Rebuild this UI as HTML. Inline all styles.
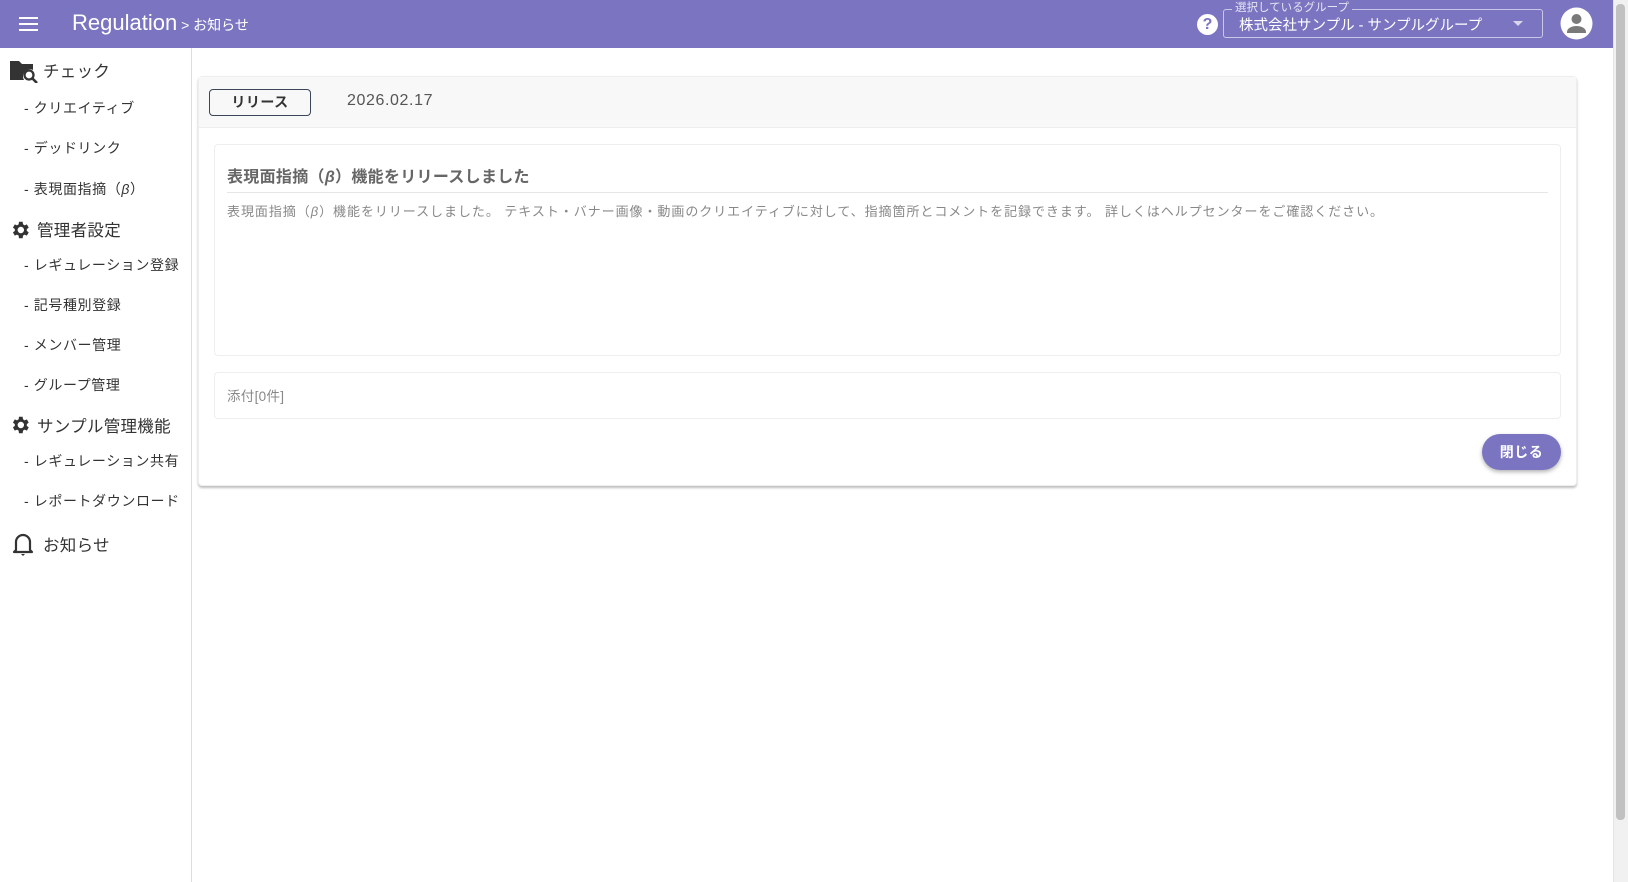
<!DOCTYPE html>
<html><head><meta charset="utf-8"><style>
*{box-sizing:border-box;margin:0;padding:0}
body{width:1628px;height:882px;overflow:hidden;background:#fff;font-family:"Liberation Sans","Noto Sans CJK JP",sans-serif;position:relative;color:#333}
.hdr{position:absolute;left:0;top:0;width:1613px;height:48px;background:#7b75c1;color:#fff}
.abs{position:absolute}
.side{position:absolute;left:0;top:48px;width:192px;height:834px;border-right:1px solid #ddd}
.it{position:absolute;left:24px;font-size:14px;color:#333;transform:translateY(-50%);white-space:nowrap;letter-spacing:0.6px}
.hd{position:absolute;left:37px;font-size:16.5px;color:#333;transform:translateY(-50%);white-space:nowrap;letter-spacing:0.3px}
.sb{position:absolute;left:1613px;top:0;width:15px;height:882px;background:#f1f1f1;border-left:1px solid #e4e4e4}
.th{position:absolute;left:1616px;top:4px;width:9px;height:816px;background:#c1c1c1;border-radius:4px}
</style></head><body>
<div class="hdr">
 <div class="abs" style="left:19px;top:17px;width:19px;height:2px;background:#fff"></div>
 <div class="abs" style="left:19px;top:23px;width:19px;height:2px;background:#fff"></div>
 <div class="abs" style="left:19px;top:29px;width:19px;height:2px;background:#fff"></div>
 <div class="abs" style="left:72px;top:10px;font-size:22px;white-space:nowrap">Regulation<span style="font-size:14px"> &gt; お知らせ</span></div>
 <div class="abs" style="left:1197px;top:14px;width:21px;height:21px;border-radius:50%;background:#fff;color:#7b75c1;font-weight:bold;font-size:16px;text-align:center;line-height:21px">?</div>
 <div class="abs" style="left:1223px;top:9px;width:320px;height:29px;border:1px solid rgba(255,255,255,.6);border-radius:3px"></div>
 <div class="abs" style="left:1232px;top:1px;padding:0 3px;background:#7b75c1;font-size:11.5px;color:rgba(255,255,255,.8);line-height:14px">選択しているグループ</div>
 <div class="abs" style="left:1239px;top:14px;font-size:14.5px;white-space:nowrap">株式会社サンプル - サンプルグループ</div>
 <div class="abs" style="left:1513px;top:21px;width:0;height:0;border-left:5px solid transparent;border-right:5px solid transparent;border-top:5px solid rgba(255,255,255,.7)"></div>
 <svg class="abs" style="left:1560px;top:7px" width="33" height="33" viewBox="0 0 33 33"><circle cx="16.5" cy="16.5" r="16" fill="#fff"/><circle cx="16.5" cy="12" r="5" fill="#7a7a7a"/><path d="M7 25c0-4 5-6 9.5-6s9.5 2 9.5 6v1H7z" fill="#7a7a7a"/></svg>
</div>
<div class="side">
 <svg class="abs" style="left:9px;top:11px" width="30" height="24" viewBox="0 0 30 24"><path d="M1 2h9l3 3h11v6a7 7 0 0 0-9 10H1z" fill="#333"/><circle cx="20" cy="16" r="4.5" fill="none" stroke="#333" stroke-width="2.3"/><path d="M23 19l5 5" stroke="#333" stroke-width="2.6"/></svg>
 <div class="hd" style="left:43px;top:22px">チェック</div>
 <div class="it" style="top:60px">- クリエイティブ</div>
 <div class="it" style="top:100px">- デッドリンク</div>
 <div class="it" style="top:141px">- 表現面指摘（<i>β</i>）</div>
 <svg class="abs" style="left:9px;top:171px" width="22" height="22" viewBox="0 0 24 24"><path fill="#333" d="M19.4 13a7.5 7.5 0 0 0 0-2l2.1-1.6-2-3.5-2.5 1a7 7 0 0 0-1.7-1L14.9 3h-4l-.4 2.9a7 7 0 0 0-1.7 1l-2.5-1-2 3.5L6.4 11a7.5 7.5 0 0 0 0 2l-2.1 1.6 2 3.5 2.5-1a7 7 0 0 0 1.7 1l.4 2.9h4l.4-2.9a7 7 0 0 0 1.7-1l2.5 1 2-3.5zM12.9 15.5a3.5 3.5 0 1 1 0-7 3.5 3.5 0 0 1 0 7z"/></svg>
 <div class="hd" style="top:181px">管理者設定</div>
 <div class="it" style="top:217px">- レギュレーション登録</div>
 <div class="it" style="top:257px">- 記号種別登録</div>
 <div class="it" style="top:297px">- メンバー管理</div>
 <div class="it" style="top:337px">- グループ管理</div>
 <svg class="abs" style="left:9px;top:366px" width="22" height="22" viewBox="0 0 24 24"><path fill="#333" d="M19.4 13a7.5 7.5 0 0 0 0-2l2.1-1.6-2-3.5-2.5 1a7 7 0 0 0-1.7-1L14.9 3h-4l-.4 2.9a7 7 0 0 0-1.7 1l-2.5-1-2 3.5L6.4 11a7.5 7.5 0 0 0 0 2l-2.1 1.6 2 3.5 2.5-1a7 7 0 0 0 1.7 1l.4 2.9h4l.4-2.9a7 7 0 0 0 1.7-1l2.5 1 2-3.5zM12.9 15.5a3.5 3.5 0 1 1 0-7 3.5 3.5 0 0 1 0 7z"/></svg>
 <div class="hd" style="top:377px">サンプル管理機能</div>
 <div class="it" style="top:413px">- レギュレーション共有</div>
 <div class="it" style="top:453px">- レポートダウンロード</div>
 <svg class="abs" style="left:11px;top:482px" width="24" height="28" viewBox="0 0 24 28"><path d="M5 20V12a7 7 0 0 1 14 0v8l2 2H3z" fill="none" stroke="#333" stroke-width="2.2" stroke-linejoin="round"/><path d="M10 24h4l-2 2z" fill="#333"/></svg>
 <div class="hd" style="left:43px;top:496px">お知らせ</div>
</div>
<div class="abs" style="left:198px;top:76px;width:1379px;height:410px;border:1px solid #eee;border-radius:4px;box-shadow:0 2px 2px rgba(0,0,0,.25);background:#fff">
 <div style="height:51px;background:#f8f8f8;border-bottom:1px solid #eee"></div>
</div>
<div class="abs" style="left:209px;top:89px;width:102px;height:27px;border:1px solid #3c4658;border-radius:4px;font-size:14px;font-weight:bold;color:#333;text-align:center;line-height:25px;letter-spacing:0.5px">リリース</div>
<div class="abs" style="left:347px;top:92px;font-size:16px;color:#555;letter-spacing:0.6px">2026.02.17</div>
<div class="abs" style="left:214px;top:144px;width:1347px;height:212px;border:1px solid #eee;border-radius:4px"></div>
<div class="abs" style="left:227px;top:163px;font-size:16px;font-weight:bold;color:#666;letter-spacing:0.3px">表現面指摘（<i>β</i>）機能をリリースしました</div>
<div class="abs" style="left:227px;top:192px;width:1321px;height:1px;background:#e6e6e6"></div>
<div class="abs" style="left:227px;top:201px;font-size:13px;color:#888;white-space:nowrap;letter-spacing:0.95px">表現面指摘（<i>β</i>）機能をリリースしました。 テキスト・バナー画像・動画のクリエイティブに対して、指摘箇所とコメントを記録できます。 詳しくはヘルプセンターをご確認ください。</div>
<div class="abs" style="left:214px;top:372px;width:1347px;height:47px;border:1px solid #eee;border-radius:4px"></div>
<div class="abs" style="left:227px;top:385px;font-size:13.5px;color:#888;letter-spacing:0.3px">添付[0件]</div>
<div class="abs" style="left:1482px;top:434px;width:79px;height:36px;border-radius:18px;background:#7b75c1;box-shadow:0 2px 4px rgba(0,0,0,.3);color:#fff;font-size:14px;font-weight:bold;text-align:center;line-height:36px;letter-spacing:0.5px">閉じる</div>
<div class="sb"></div><div class="th"></div>
</body></html>
